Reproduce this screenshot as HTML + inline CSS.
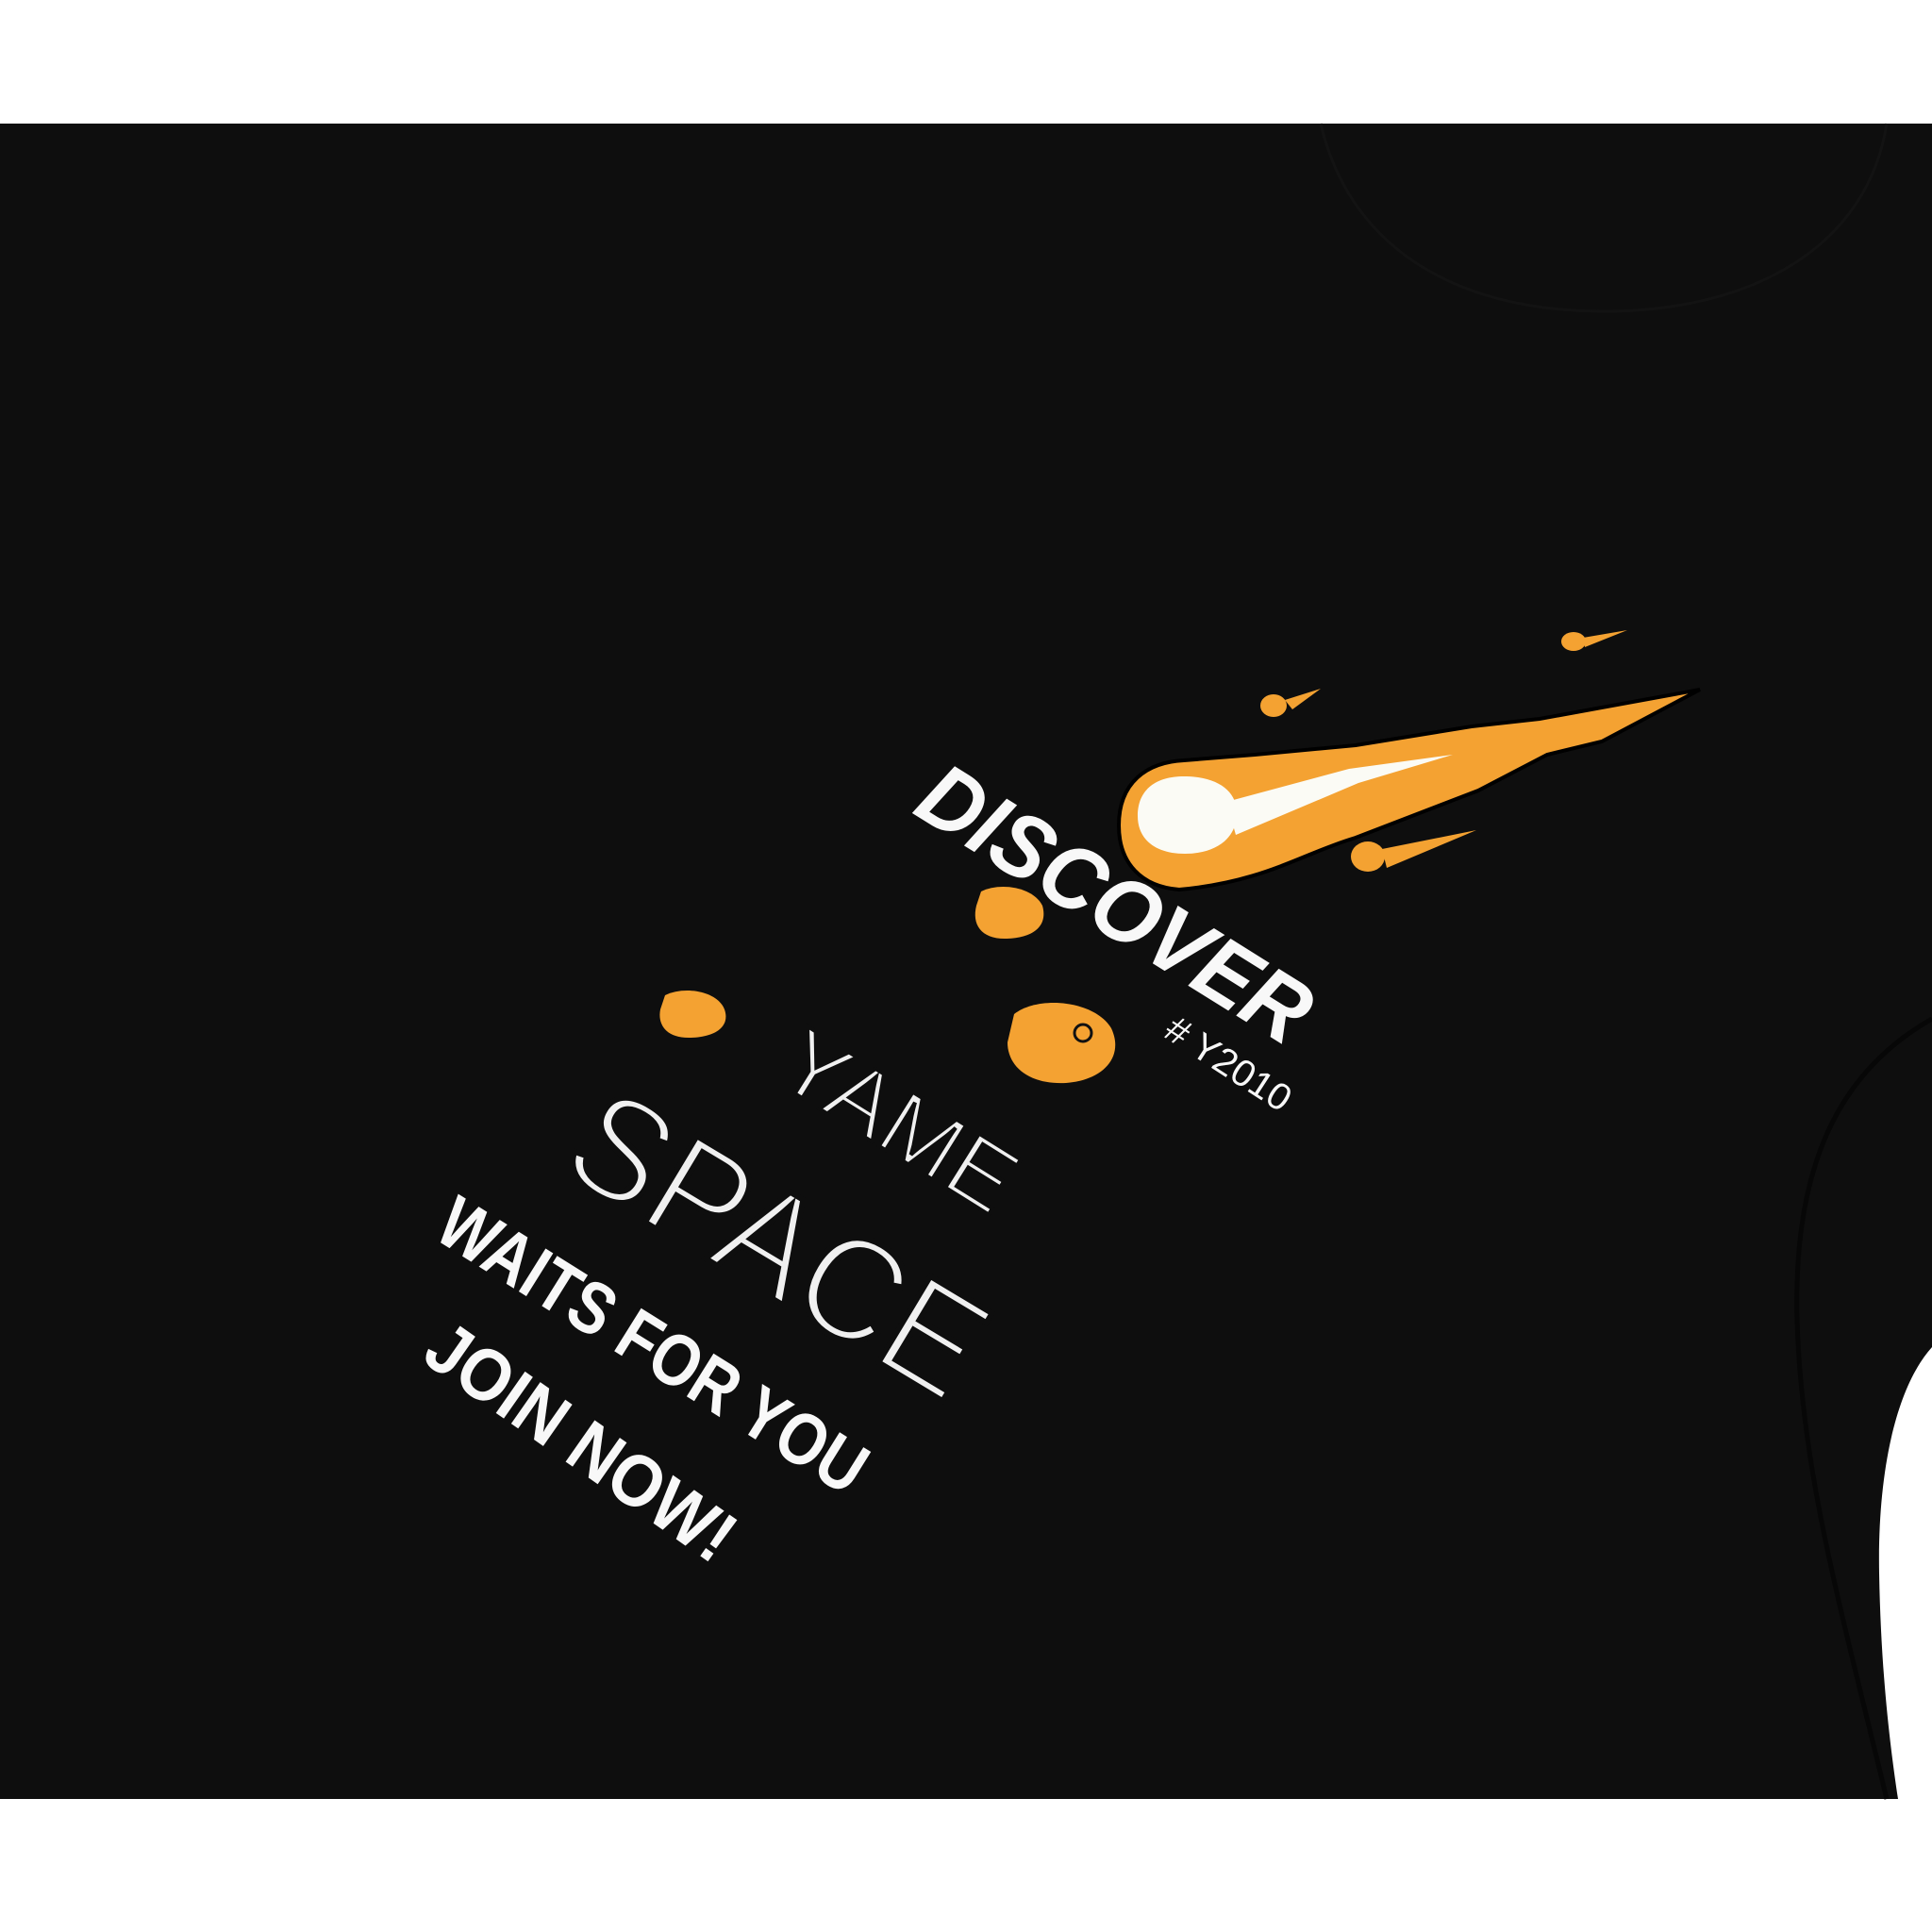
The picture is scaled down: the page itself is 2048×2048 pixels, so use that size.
<!DOCTYPE html>
<html><head><meta charset="utf-8"><style>
html,body{margin:0;padding:0;background:#fff;}
svg{display:block}
</style></head><body>
<svg width="2048" height="2048" viewBox="0 0 2048 2048" xmlns="http://www.w3.org/2000/svg">
<rect width="2048" height="2048" fill="#ffffff"/>
<path d="M0,131 L2048,131 L2048,1428 C2010,1470 1990,1560 1992,1668 C1994,1780 2005,1860 2012,1907 L0,1907 Z" fill="#0e0e0e"/>
<path d="M1400,131 C1430,260 1540,330 1700,330 C1860,330 1980,260 2000,131" fill="none" stroke="#131313" stroke-width="3"/>
<path d="M2048,1080 C1960,1130 1900,1220 1905,1400 C1910,1560 1950,1700 2000,1907" fill="none" stroke="#070707" stroke-width="5"/>
<!-- comet -->
<path d="M1186,875 C1186,830 1215,808 1255,806 L1330,800 L1437,790 L1560,770 L1632,762 L1802,731 L1698,786 L1640,800 L1567,838 L1437,888 C1380,905 1340,935 1250,943 C1210,940 1186,915 1186,875 Z" fill="#f4a232" stroke="#000" stroke-width="4"/>
<path d="M1206,865 C1206,835 1228,822 1258,823 C1295,824 1313,842 1311,865 C1309,892 1285,905 1256,905 C1225,905 1206,890 1206,865 Z" fill="#fbfbf5"/>
<path d="M1300,850 L1430,815 L1540,800 L1440,830 L1310,885 Z" fill="#fbfbf5"/>
<!-- small rocks -->
<ellipse cx="1350" cy="748" rx="14" ry="12" fill="#f4a232"/>
<path d="M1362,742 L1400,730 L1370,752 Z" fill="#f4a232"/>
<ellipse cx="1450" cy="908" rx="18" ry="16" fill="#f4a232"/>
<path d="M1465,900 L1565,880 L1470,920 Z" fill="#f4a232"/>
<ellipse cx="1668" cy="680" rx="13" ry="10" fill="#f4a232"/>
<path d="M1678,676 L1725,668 L1680,686 Z" fill="#f4a232"/>
<path d="M1040,945 C1060,935 1095,940 1105,960 C1112,985 1090,995 1065,995 C1040,995 1030,980 1035,960 Z" fill="#f4a232"/>
<path d="M705,1055 C725,1045 760,1050 768,1070 C775,1090 755,1100 730,1100 C705,1100 697,1085 700,1070 Z" fill="#f4a232"/>
<path d="M1075,1075 C1100,1055 1160,1060 1178,1090 C1192,1120 1170,1145 1130,1148 C1090,1150 1068,1130 1068,1105 Z" fill="#f4a232"/>
<circle cx="1148" cy="1095" r="9" fill="none" stroke="#111" stroke-width="3"/>
<!-- text -->
<g fill="#f8f8f8" font-family="'Liberation Sans', sans-serif" text-anchor="middle" dominant-baseline="central">
<text transform="translate(1182,958) rotate(32)" font-size="96" font-weight="bold" font-style="italic" textLength="470" lengthAdjust="spacingAndGlyphs">DISCOVER</text>
<text transform="translate(1302,1128) rotate(33)" font-size="40" textLength="150" lengthAdjust="spacingAndGlyphs"># Y2010</text>
<text transform="translate(692,1426) rotate(32)" font-size="78" font-weight="bold" textLength="520" lengthAdjust="spacingAndGlyphs">WAITS FOR YOU</text>
<text transform="translate(616,1528) rotate(35)" font-size="78" font-weight="bold" textLength="380" lengthAdjust="spacingAndGlyphs">JOIN NOW!</text>
</g>
<g fill="#f0f0f0" stroke="#0e0e0e" font-family="'Liberation Sans', sans-serif" text-anchor="middle" dominant-baseline="central">
<text transform="translate(953,1188) rotate(32)" font-size="98" stroke-width="4" textLength="275" lengthAdjust="spacingAndGlyphs">YAME</text>
<text transform="translate(825,1318) rotate(31)" font-size="155" stroke-width="6" textLength="483" lengthAdjust="spacingAndGlyphs">SPACE</text>
</g>
</svg>
</body></html>
